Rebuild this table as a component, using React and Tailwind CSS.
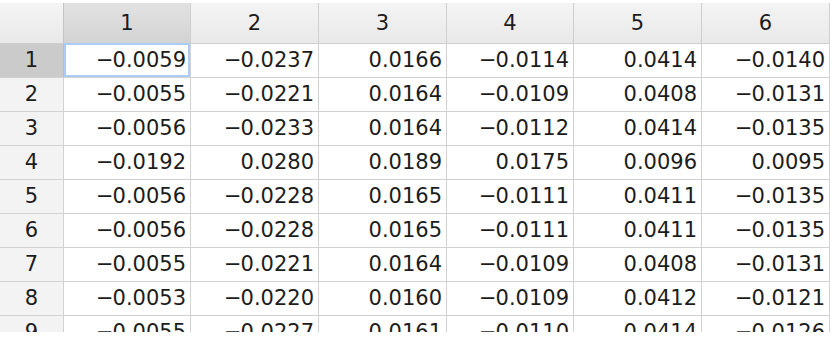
const COLS = ["1", "2", "3", "4", "5", "6"];

const ROWS = [
  ["−0.0059", "−0.0237", "0.0166", "−0.0114", "0.0414", "−0.0140"],
  ["−0.0055", "−0.0221", "0.0164", "−0.0109", "0.0408", "−0.0131"],
  ["−0.0056", "−0.0233", "0.0164", "−0.0112", "0.0414", "−0.0135"],
  ["−0.0192", "0.0280", "0.0189", "0.0175", "0.0096", "0.0095"],
  ["−0.0056", "−0.0228", "0.0165", "−0.0111", "0.0411", "−0.0135"],
  ["−0.0056", "−0.0228", "0.0165", "−0.0111", "0.0411", "−0.0135"],
  ["−0.0055", "−0.0221", "0.0164", "−0.0109", "0.0408", "−0.0131"],
  ["−0.0053", "−0.0220", "0.0160", "−0.0109", "0.0412", "−0.0121"],
  ["−0.0055", "−0.0227", "0.0161", "−0.0110", "0.0414", "−0.0126"],
];

export default function App() {
  return (
    <div
      className="w-[834px] h-[344px] bg-white overflow-hidden pt-[3px] text-[#1c1c1c]"
      style={{ fontFamily: '"DejaVu Sans", "Liberation Sans", sans-serif' }}
    >
      <div className="h-[329px] overflow-hidden">
        <div className="grid grid-cols-[64px_127px_128px_128px_127px_128px_128px] w-[830px] text-[21px] leading-none">
          {/* header row */}
          <div className="h-[41px] bg-gradient-to-b from-[#f4f4f4] to-[#e9e9e9] border-r border-b border-[#cfcfcf]" />
          {COLS.map((c, i) => (
            <div
              key={c}
              className={`h-[41px] flex items-center justify-center border-r border-b border-[#cfcfcf] ${
                i === 0
                  ? "bg-gradient-to-b from-[#e2e2e2] to-[#d3d3d3] border-l border-l-[#c4c4c4] -ml-px"
                  : "bg-gradient-to-b from-[#f4f4f4] to-[#e9e9e9]"
              }`}
            >
              {c}
            </div>
          ))}

          {/* body rows */}
          {ROWS.map((row, r) => (
            <RowCells key={r} index={r} row={row} />
          ))}
        </div>
      </div>
    </div>
  );
}

function Num({ v }) {
  if (!v.startsWith("−")) return v;
  return (
    <>
      <span className="-mr-px">−</span>
      {v.slice(1)}
    </>
  );
}

function RowCells({ index, row }) {
  const selected = index === 0;
  return (
    <>
      <div
        className={`h-[34px] flex items-center justify-center border-r border-b border-[#d2d2d2] ${
          selected ? "bg-[#cbcbcb] border-r-[#bdbdbd]" : "bg-[#f3f3f3]"
        }`}
      >
        {index + 1}
      </div>
      {row.map((v, c) => (
        <div
          key={c}
          className="h-[34px] relative flex items-center justify-end pr-[4px] border-r border-b border-[#d2d2d2]"
        >
          {selected && c === 0 && (
            <div className="absolute inset-0 -top-px border-2 border-[#aacdf6]" />
          )}
          <span className="relative">
            <Num v={v} />
          </span>
        </div>
      ))}
    </>
  );
}
